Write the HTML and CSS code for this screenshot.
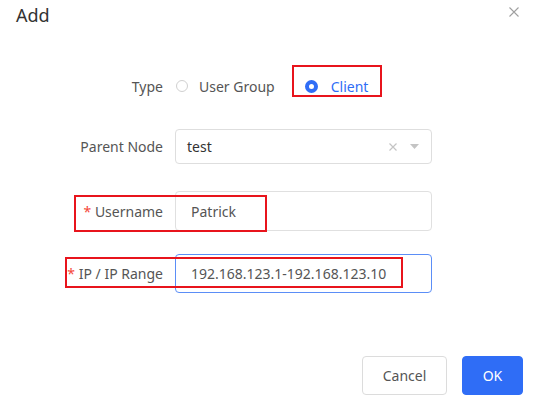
FILE: index.html
```html
<!DOCTYPE html>
<html>
<head>
<meta charset="utf-8">
<link rel="stylesheet" href="styles.css">
</head>
<body>
<div class="dialog">
  <header class="head">
    <h1 class="title">Add</h1>
    <span class="close" aria-label="close">
      <svg width="10" height="10" viewBox="0 0 10 10"><path d="M0.5 0.5L9.5 9.5M9.5 0.5L0.5 9.5" stroke="#a0a0a0" stroke-width="1.1" fill="none"/></svg>
    </span>
  </header>
  <div class="form">
    <div class="row row-type">
      <label class="label">Type</label>
      <div class="control radios">
        <span class="radio"><span class="dot"></span><span class="rtext">User Group</span></span>
        <span class="radio checked"><span class="dot"></span><span class="rtext">Client</span></span>
      </div>
    </div>
    <div class="row row-parent">
      <label class="label">Parent Node</label>
      <div class="control select">
        <span class="val">test</span>
        <span class="icons">
          <svg width="8" height="8" viewBox="0 0 8 8"><path d="M0.5 0.5L7.5 7.5M7.5 0.5L0.5 7.5" stroke="#c4c4c4" stroke-width="1.2" fill="none"/></svg>
          <svg width="9" height="5" viewBox="0 0 9 5"><path d="M0 0H9L4.5 5Z" fill="#c4c4c4"/></svg>
        </span>
      </div>
    </div>
    <div class="row row-user">
      <label class="label"><span class="req">*</span> Username</label>
      <div class="control input">Patrick</div>
    </div>
    <div class="row row-ip">
      <label class="label"><span class="req">*</span> IP / IP Range</label>
      <div class="control input focus">192.168.123.1-192.168.123.10</div>
    </div>
  </div>
  <footer class="foot">
    <button class="btn btn-cancel">Cancel</button>
    <button class="btn btn-ok">OK</button>
  </footer>
  <div class="mark mark-client"></div>
  <div class="mark mark-user"></div>
  <div class="mark mark-ip"></div>
</div>
</body>
</html>
```
FILE: styles.css
```css
* { box-sizing: border-box; }
html, body { margin: 0; padding: 0; background: #fff; }
body { font-family: "Noto Sans", "Open Sans", sans-serif; font-size: 14px; color: #333; }

.dialog { position: relative; width: 539px; height: 411px; background: #fff; }

.head { display: flex; justify-content: space-between; align-items: flex-start; height: 32px; padding: 0 20px 0 16px; }
.title { margin: 0; font-size: 18px; font-weight: 400; line-height: 24px; padding-top: 3px; color: #333; }
.close { display: flex; padding-top: 7px; }

.form { margin-top: 38px; display: flex; flex-direction: column; }
.row { display: flex; align-items: center; }
.label { width: 175px; padding-right: 12px; text-align: right; color: #555; white-space: nowrap; }
.req { color: #f5483b; }
.control { width: 257px; }

.row-type { height: 32px; }
.radios { display: flex; align-items: center; }
.radio { display: flex; align-items: center; color: #555; }
.radio .dot { width: 12px; height: 12px; border: 1px solid #d0d0d0; border-radius: 50%; margin-left: 1px; margin-right: 11px; }
.radio + .radio { margin-left: 29px; }
.radio.checked { color: #2f6df6; }
.radio.checked .dot { width: 13px; height: 13px; border: 4px solid #2f6df6; background: #fff; margin-right: 13px; }

.row-parent { margin-top: 27px; height: 35px; }
.select { height: 35px; border: 1px solid #dedede; border-radius: 4px; display: flex; align-items: center; justify-content: space-between; padding: 0 12px 0 11px; color: #333; }
.icons { display: flex; align-items: center; gap: 13px; }

.row-user { margin-top: 27px; height: 40px; }
.row-ip { margin-top: 23px; height: 39px; }
.input { height: 100%; border: 1px solid #e0e0e0; border-radius: 4px; display: flex; align-items: center; padding-left: 15px; color: #555; }
.input.focus { border-color: #5b8ef7; }

.foot { display: flex; justify-content: flex-end; gap: 15px; padding-right: 16px; margin-top: 63px; }
.btn { height: 39px; border-radius: 4px; font-family: inherit; font-size: 14px; cursor: pointer; }
.btn-cancel { width: 85px; background: #fff; border: 1px solid #dcdcdc; color: #555; }
.btn-ok { width: 61px; background: #2f6df6; border: 1px solid #2f6df6; color: #fff; }

.mark { position: absolute; border: 2px solid #e8141c; }
.mark-client { left: 292px; top: 65px; width: 90px; height: 32px; }
.mark-user { left: 74px; top: 195px; width: 193px; height: 37px; }
.mark-ip { left: 65px; top: 257px; width: 338px; height: 31px; }
```
